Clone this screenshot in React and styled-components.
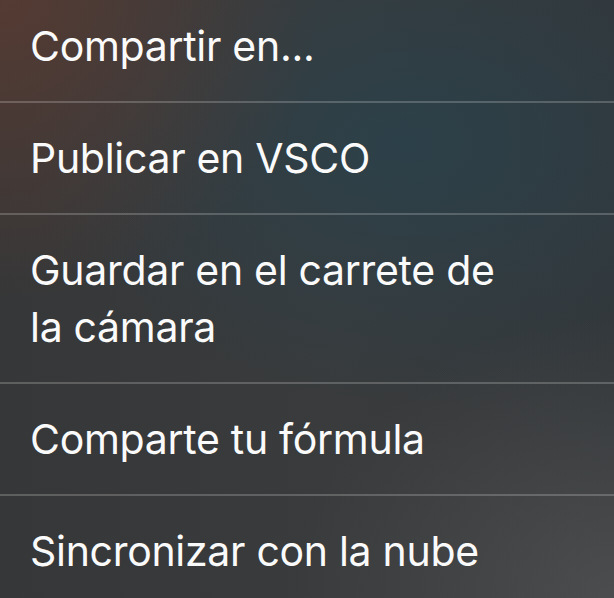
import React from "react";
import styled, { createGlobalStyle } from "styled-components";

const Global = createGlobalStyle`
  html, body {
    margin: 0;
    padding: 0;
    width: 100%;
    height: 100%;
    overflow: hidden;
    background: #3a3b3c;
  }
  #root { height: 100%; }
`;

const Sheet = styled.div`
  width: 614px;
  height: 598px;
  overflow: hidden;
  background:
    radial-gradient(ellipse 320px 300px at 0% 0%, rgba(110, 62, 46, 0.55), rgba(110, 62, 46, 0) 100%),
    radial-gradient(ellipse 380px 260px at 66% 24%, rgba(36, 68, 82, 0.6), rgba(36, 68, 82, 0) 100%),
    radial-gradient(ellipse 320px 280px at 100% 100%, rgba(84, 84, 84, 0.75), rgba(84, 84, 84, 0) 100%),
    linear-gradient(90deg, #363738 0%, #393b3c 55%, #33373a 100%);
  font-family: Inter, "Noto Sans", "Liberation Sans", sans-serif;
`;

const List = styled.ul`
  list-style: none;
  margin: -9px 0 0 0;
  padding: 0;
`;

const Row = styled.li`
  padding: 27px 0 26px 30px;
  border-bottom: 2px solid rgba(255, 255, 255, 0.2);
`;

const Label = styled.span`
  display: block;
  max-width: ${(p) => (p.$narrow ? "485px" : "none")};
  color: #fafafa;
  font-size: 41px;
  line-height: 57px;
  font-weight: 400;
  letter-spacing: -0.3px;
`;

const items = [
  { text: "Compartir en..." },
  { text: "Publicar en VSCO" },
  { text: "Guardar en el carrete de la cámara", narrow: true },
  { text: "Comparte tu fórmula" },
  { text: "Sincronizar con la nube" },
];

export default function App() {
  return (
    <>
      <Global />
      <Sheet>
        <List>
          {items.map((it) => (
            <Row key={it.text}>
              <Label $narrow={it.narrow}>{it.text}</Label>
            </Row>
          ))}
        </List>
      </Sheet>
    </>
  );
}
